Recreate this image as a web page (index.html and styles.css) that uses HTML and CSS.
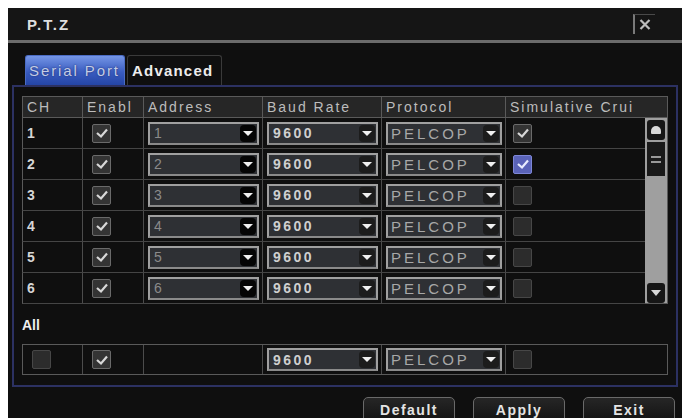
FILE: index.html
```html
<!DOCTYPE html>
<html>
<head>
<meta charset="utf-8">
<link rel="stylesheet" href="styles.css">
</head>
<body>
<div class="window">
  <div class="titlebar">
    <span class="title">P.T.Z</span>
    <div class="close"><svg width="12" height="11" viewBox="0 0 12 11"><path d="M1.5 1 L10.5 10 M10.5 1 L1.5 10" stroke="#bdbdbd" stroke-width="2.2"/></svg></div>
  </div>
  <div class="main">
    <div class="tabs">
      <div class="tab active">Serial Port</div>
      <div class="tab">Advanced</div>
    </div>
    <div class="panel">
      <div class="grid head">
        <div class="hc">CH</div>
        <div class="hc">Enabl</div>
        <div class="hc">Address</div>
        <div class="hc">Baud Rate</div>
        <div class="hc">Protocol</div>
        <div class="hc last">Simulative Crui</div>
      </div>
      <div class="bodywrap">
        <div class="rows">
          <div class="grid row">
            <div class="c ch">1</div>
            <div class="c"><span class="cb on"><svg width="14" height="12" viewBox="0 0 14 12"><path d="M2 6 L6 9.5 L12 2.5" fill="none" stroke="#d8d8d8" stroke-width="2.2"/></svg></span></div>
            <div class="c"><div class="dd"><span class="val dim">1</span><span class="arr blk"></span></div></div>
            <div class="c"><div class="dd"><span class="val num">9600</span><span class="arr"></span></div></div>
            <div class="c"><div class="dd"><span class="val proto">PELCOP</span><span class="arr"></span></div></div>
            <div class="c sim"><span class="cb on"><svg width="14" height="12" viewBox="0 0 14 12"><path d="M2 6 L6 9.5 L12 2.5" fill="none" stroke="#d8d8d8" stroke-width="2.2"/></svg></span></div>
          </div>
          <div class="grid row">
            <div class="c ch">2</div>
            <div class="c"><span class="cb on"><svg width="14" height="12" viewBox="0 0 14 12"><path d="M2 6 L6 9.5 L12 2.5" fill="none" stroke="#d8d8d8" stroke-width="2.2"/></svg></span></div>
            <div class="c"><div class="dd"><span class="val dim">2</span><span class="arr blk"></span></div></div>
            <div class="c"><div class="dd"><span class="val num">9600</span><span class="arr"></span></div></div>
            <div class="c"><div class="dd"><span class="val proto">PELCOP</span><span class="arr"></span></div></div>
            <div class="c sim"><span class="cb blue"><svg width="14" height="12" viewBox="0 0 14 12"><path d="M2 6 L6 9.5 L12 2.5" fill="none" stroke="#e8ecff" stroke-width="2.2"/></svg></span></div>
          </div>
          <div class="grid row">
            <div class="c ch">3</div>
            <div class="c"><span class="cb on"><svg width="14" height="12" viewBox="0 0 14 12"><path d="M2 6 L6 9.5 L12 2.5" fill="none" stroke="#d8d8d8" stroke-width="2.2"/></svg></span></div>
            <div class="c"><div class="dd"><span class="val dim">3</span><span class="arr blk"></span></div></div>
            <div class="c"><div class="dd"><span class="val num">9600</span><span class="arr"></span></div></div>
            <div class="c"><div class="dd"><span class="val proto">PELCOP</span><span class="arr"></span></div></div>
            <div class="c sim"><span class="cb off"></span></div>
          </div>
          <div class="grid row">
            <div class="c ch">4</div>
            <div class="c"><span class="cb on"><svg width="14" height="12" viewBox="0 0 14 12"><path d="M2 6 L6 9.5 L12 2.5" fill="none" stroke="#d8d8d8" stroke-width="2.2"/></svg></span></div>
            <div class="c"><div class="dd"><span class="val dim">4</span><span class="arr blk"></span></div></div>
            <div class="c"><div class="dd"><span class="val num">9600</span><span class="arr"></span></div></div>
            <div class="c"><div class="dd"><span class="val proto">PELCOP</span><span class="arr"></span></div></div>
            <div class="c sim"><span class="cb off"></span></div>
          </div>
          <div class="grid row">
            <div class="c ch">5</div>
            <div class="c"><span class="cb on"><svg width="14" height="12" viewBox="0 0 14 12"><path d="M2 6 L6 9.5 L12 2.5" fill="none" stroke="#d8d8d8" stroke-width="2.2"/></svg></span></div>
            <div class="c"><div class="dd"><span class="val dim">5</span><span class="arr blk"></span></div></div>
            <div class="c"><div class="dd"><span class="val num">9600</span><span class="arr"></span></div></div>
            <div class="c"><div class="dd"><span class="val proto">PELCOP</span><span class="arr"></span></div></div>
            <div class="c sim"><span class="cb off"></span></div>
          </div>
          <div class="grid row">
            <div class="c ch">6</div>
            <div class="c"><span class="cb on"><svg width="14" height="12" viewBox="0 0 14 12"><path d="M2 6 L6 9.5 L12 2.5" fill="none" stroke="#d8d8d8" stroke-width="2.2"/></svg></span></div>
            <div class="c"><div class="dd"><span class="val dim">6</span><span class="arr blk"></span></div></div>
            <div class="c"><div class="dd"><span class="val num">9600</span><span class="arr"></span></div></div>
            <div class="c"><div class="dd"><span class="val proto">PELCOP</span><span class="arr"></span></div></div>
            <div class="c sim"><span class="cb off"></span></div>
          </div>
        </div>
        <div class="scroll">
          <div class="sbtn"><span class="up"></span></div>
          <div class="thumb"><span class="grip"></span><span class="grip"></span></div>
          <div class="track"></div>
          <div class="sbtn"><span class="down"></span></div>
        </div>
      </div>
      <div class="all-label">All</div>
      <div class="grid allrow">
        <div class="c"><span class="cb off"></span></div>
        <div class="c"><span class="cb on"><svg width="14" height="12" viewBox="0 0 14 12"><path d="M2 6 L6 9.5 L12 2.5" fill="none" stroke="#d8d8d8" stroke-width="2.2"/></svg></span></div>
        <div class="c"></div>
        <div class="c"><div class="dd"><span class="val num">9600</span><span class="arr"></span></div></div>
        <div class="c"><div class="dd"><span class="val proto">PELCOP</span><span class="arr"></span></div></div>
        <div class="c sim last"><span class="cb off"></span></div>
      </div>
    </div>
    <div class="buttons">
      <div class="btn">Default</div>
      <div class="btn">Apply</div>
      <div class="btn">Exit</div>
    </div>
  </div>
</div>
</body>
</html>
```

FILE: styles.css
```css
body {
  margin: 0;
  background: #ffffff;
  font-family: "Liberation Sans", Arial, sans-serif;
  font-size: 14px;
}

.window {
  margin: 8px 0 0 8px;
  width: 674px;
  height: 410px;
  background: #0f0f0f;
  overflow: hidden;
  display: flex;
  flex-direction: column;
}

.titlebar {
  height: 32px;
  flex: none;
  display: flex;
  align-items: center;
  padding-left: 19px;
  background: #151515;
  border-bottom: 3px solid #6c6c6c;
}

.title {
  color: #dedede;
  font-weight: bold;
  font-size: 15px;
  letter-spacing: 2px;
}

.close {
  margin-left: auto;
  margin-right: 27px;
  width: 20px;
  height: 19px;
  border-left: 2px solid #7a7a7a;
  border-top: 1px solid #4a4a4a;
  display: flex;
  align-items: center;
  justify-content: center;
}

.main {
  padding: 12px 4px 0 4px;
}

.tabs {
  display: flex;
  gap: 2px;
  margin-left: 13px;
  height: 30px;
}

.tab {
  width: 95px;
  box-sizing: border-box;
  border: 1px solid #3a3a3a;
  border-bottom: none;
  border-radius: 3px 3px 0 0;
  color: #ececec;
  font-size: 15px;
  font-weight: bold;
  letter-spacing: 1.2px;
  padding: 6px 0 0 4px;
  white-space: nowrap;
}

.tab.active {
  width: 100px;
  border-color: #4b6cc4;
  background: linear-gradient(#7596e6, #3a5cc0 55%, #2445a6);
  color: #c3cce6;
  font-weight: normal;
  letter-spacing: 1.9px;
  text-shadow: 0 0 2px #1a2b66;
  padding-left: 3px;
}

.panel {
  width: 666px;
  height: 302px;
  box-sizing: border-box;
  border: 2px solid #2c3162;
  padding: 9px 0 0 8px;
}

.grid {
  display: grid;
  grid-template-columns: 60px 61px 119px 119px 124px 163px;
  width: 646px;
}

.head {
  height: 22px;
  box-sizing: border-box;
  border: 1px solid #5a5a5a;
  background: #262626;
}

.hc {
  border-right: 1px solid #5a5a5a;
  color: #bcbcbc;
  font-size: 14px;
  letter-spacing: 2px;
  padding-left: 4px;
  line-height: 20px;
  white-space: nowrap;
  overflow: hidden;
}

.hc.last {
  border-right: none;
}

.bodywrap {
  display: flex;
  width: 646px;
}

.rows {
  width: 623px;
}

.row {
  grid-template-columns: 60px 61px 119px 119px 124px 140px;
  width: 623px;
  height: 31px;
  box-sizing: border-box;
  border-left: 1px solid #5a5a5a;
  border-bottom: 1px solid #454545;
}

.c {
  border-right: 1px solid #4c4c4c;
  display: flex;
  align-items: center;
  padding-left: 4px;
  min-width: 0;
}

.c.sim {
  border-right: none;
  padding-left: 7px;
}

.ch {
  color: #d6d6d6;
  font-weight: bold;
  font-size: 14px;
  padding-left: 4px;
}

.cb {
  width: 19px;
  height: 19px;
  box-sizing: border-box;
  margin-left: 5px;
  border: 1px solid #6a6a6a;
  border-radius: 2px;
  background: #343434;
  display: flex;
  align-items: center;
  justify-content: center;
}

.c.sim .cb {
  margin-left: 0;
}

.cb.off {
  background: #2c2c2c;
  border-color: #474747;
}

.cb.blue {
  background: #5a63b8;
  border-color: #7d86d6;
}

.dd {
  flex: 1;
  margin-right: 3px;
  height: 23px;
  box-sizing: border-box;
  border: 2px solid #a0a0a0;
  border-bottom-color: #8a8a8a;
  background: #2e3034;
  display: flex;
  align-items: center;
  justify-content: space-between;
  overflow: hidden;
}

.val {
  color: #c8c8c8;
  font-size: 14px;
  padding-left: 4px;
  letter-spacing: 1px;
  white-space: nowrap;
}

.val.dim {
  color: #8a8a8a;
}

.val.num {
  font-weight: bold;
  color: #cfcfcf;
  letter-spacing: 2.5px;
}

.val.proto {
  color: #a8a8a8;
  font-size: 15px;
  letter-spacing: 3px;
  padding-left: 3px;
}

.arr {
  flex: none;
  width: 16px;
  height: 17px;
  margin-right: 1px;
  border-radius: 4px;
  background: #1c1c1c;
  display: flex;
  align-items: center;
  justify-content: center;
}

.arr.blk {
  background: #050505;
}

.arr::after {
  content: "";
  border-left: 5px solid transparent;
  border-right: 5px solid transparent;
  border-top: 5px solid #f0f0f0;
}

.scroll {
  width: 23px;
  height: 186px;
  box-sizing: border-box;
  border-right: 1px solid #5a5a5a;
  border-bottom: 1px solid #5a5a5a;
  background: #9f9f9f;
  display: flex;
  flex-direction: column;
  align-items: center;
}

.sbtn {
  width: 18px;
  height: 20px;
  background: #161616;
  border-radius: 3px;
  display: flex;
  align-items: center;
  justify-content: center;
  margin-top: 2px;
}

.up {
  width: 10px;
  height: 8px;
  background: #d8d8d8;
  border-radius: 5px 5px 1px 1px;
}

.down {
  border-left: 5px solid transparent;
  border-right: 5px solid transparent;
  border-top: 6px solid #d8d8d8;
}

.thumb {
  width: 18px;
  height: 34px;
  background: #1a1a1a;
  margin-top: 2px;
  display: flex;
  flex-direction: column;
  align-items: center;
  justify-content: center;
  gap: 3px;
}

.grip {
  width: 10px;
  height: 2px;
  background: #9a9a9a;
}

.track {
  flex: 1;
}

.all-label {
  height: 40px;
  box-sizing: border-box;
  padding-top: 12px;
  color: #eeeeee;
  font-weight: bold;
  font-size: 14px;
  line-height: 18px;
}

.allrow {
  height: 31px;
  box-sizing: border-box;
  border: 1px solid #5a5a5a;
}

.allrow .c.last {
  border-right: none;
}

.buttons {
  display: flex;
  justify-content: flex-end;
  gap: 18px;
  margin-top: 10px;
  padding-right: 3px;
}

.btn {
  width: 92px;
  height: 26px;
  box-sizing: border-box;
  border: 1px solid #6a6a6a;
  border-radius: 5px 5px 0 0;
  background: linear-gradient(#262626, #121212);
  color: #e4e4e4;
  font-weight: bold;
  font-size: 14px;
  letter-spacing: 1.5px;
  text-align: center;
  line-height: 24px;
}
```
